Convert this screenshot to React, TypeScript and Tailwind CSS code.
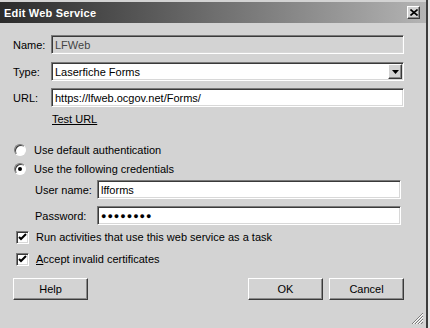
import React from 'react';

const sunken =
  'border border-t-[#7a7a7a] border-l-[#7a7a7a] border-b-white border-r-white shadow-[inset_1px_1px_0_#3a3a3a,inset_-1px_-1px_0_#d8d8d8]';
const raised =
  'border border-t-white border-l-white border-b-[#3a3a3a] border-r-[#3a3a3a] shadow-[inset_-1px_-1px_0_#8a8a8a]';

function Field({ value, className = '', disabled = false }: { value: string; className?: string; disabled?: boolean }) {
  return (
    <div
      className={`${sunken} h-[19px] flex items-center px-[3px] ${disabled ? 'bg-[#d3d3d3] text-[#444]' : 'bg-white text-black'} ${className}`}
    >
      {value}
    </div>
  );
}

function Radio({ checked }: { checked: boolean }) {
  return (
    <span className="w-[12px] h-[12px] rounded-full bg-white border border-t-[#7a7a7a] border-l-[#7a7a7a] border-b-white border-r-white shadow-[inset_1px_1px_0_#3a3a3a] flex items-center justify-center">
      {checked && <span className="w-[4px] h-[4px] rounded-full bg-black" />}
    </span>
  );
}

function Check() {
  return (
    <span className={`w-[13px] h-[13px] bg-white ${sunken} flex items-center justify-center`}>
      <svg width="9" height="9" viewBox="0 0 9 9">
        <path d="M1 4 L3 6 L8 1" stroke="black" strokeWidth="2" fill="none" />
      </svg>
    </span>
  );
}

function Button({ label }: { label: string }) {
  return (
    <div className={`${raised} bg-[#d3d3d3] w-[75px] h-[22px] flex items-center justify-center text-black`}>
      {label}
    </div>
  );
}

export default function App() {
  return (
    <div
      className="w-[430px] h-[328px] bg-[#e6e6e6] overflow-hidden text-[11px] leading-[16px]"
      style={{ fontFamily: '"Liberation Sans", Arial, sans-serif' }}
    >
      <div className="w-[428px] h-[328px] bg-[#d3d3d3] border-r-2 border-r-[#3c3c3c] pt-[2px] relative">
        {/* title bar */}
        <div className="h-[21px] bg-gradient-to-r from-[#2b2b2b] via-[#6e6e6e] to-[#b4b4b4] flex items-center justify-between pl-[4px] pr-[6px]">
          <span className="text-white font-bold text-[11px] tracking-[0.2px]">Edit Web Service</span>
          <div className={`${raised} bg-[#d3d3d3] w-[13px] h-[13px] flex items-center justify-center`}>
            <svg width="8" height="7" viewBox="0 0 8 7">
              <path d="M0.5 0.5 L7.5 6.5 M7.5 0.5 L0.5 6.5" stroke="black" strokeWidth="1.6" />
            </svg>
          </div>
        </div>

        <div className="pl-[13px] pr-[22px]">
          <div className="flex items-center mt-[12px]">
            <span className="w-[38px] text-black">Name:</span>
            <Field value="LFWeb" disabled className="flex-1" />
          </div>
          <div className="flex items-center mt-[8px]">
            <span className="w-[38px] text-black">Type:</span>
            <div className={`${sunken} flex-1 h-[19px] bg-white flex items-center justify-between pl-[3px] pr-[1px]`}>
              <span>Laserfiche Forms</span>
              <div className={`${raised} bg-[#d3d3d3] w-[14px] h-[15px] flex items-center justify-center`}>
                <svg width="7" height="4" viewBox="0 0 7 4">
                  <path d="M0 0 L7 0 L3.5 4 Z" fill="black" />
                </svg>
              </div>
            </div>
          </div>
          <div className="flex items-center mt-[7px]">
            <span className="w-[38px] text-black">URL:</span>
            <Field value="https://lfweb.ocgov.net/Forms/" className="flex-1" />
          </div>
          <div className="ml-[39px] mt-[4px] underline text-black">Test URL</div>

          <div className="flex items-center gap-[8px] mt-[15px] ml-[1px] text-black">
            <Radio checked={false} />
            <span>Use default authentication</span>
          </div>
          <div className="flex items-center gap-[8px] mt-[3px] ml-[1px] text-black">
            <Radio checked />
            <span>Use the following credentials</span>
          </div>

          <div className="flex items-center mt-[3px] pl-[22px] pr-[3px]">
            <span className="w-[62px] text-black">User name:</span>
            <Field value="lfforms" className="flex-1" />
          </div>
          <div className="flex items-center mt-[7px] pl-[22px] pr-[3px]">
            <span className="w-[62px] text-black">Password:</span>
            <Field value="●●●●●●●●" className="flex-1 text-[9px] tracking-[1px]" />
          </div>

          <div className="flex items-center gap-[7px] mt-[4px] ml-[3px] text-black">
            <Check />
            <span>Run activities that use this web service as a task</span>
          </div>
          <div className="flex items-center gap-[7px] mt-[6px] ml-[3px] text-black">
            <Check />
            <span>
              <span className="underline">A</span>ccept invalid certificates
            </span>
          </div>

          <div className="flex items-center justify-between mt-[11px]">
            <Button label="Help" />
            <div className="flex gap-[6px]">
              <Button label="OK" />
              <Button label="Cancel" />
            </div>
          </div>
        </div>

        {/* resize grip */}
        <svg className="absolute right-[2px] bottom-[3px]" width="13" height="13" viewBox="0 0 13 13">
          <path d="M12 1 L1 12 M12 4 L4 12 M12 7 L7 12 M12 10 L10 12" stroke="#7a7a7a" strokeWidth="1" />
          <path d="M12 2 L2 12 M12 5 L5 12 M12 8 L8 12" stroke="#ffffff" strokeWidth="1" />
        </svg>
      </div>
    </div>
  );
}
